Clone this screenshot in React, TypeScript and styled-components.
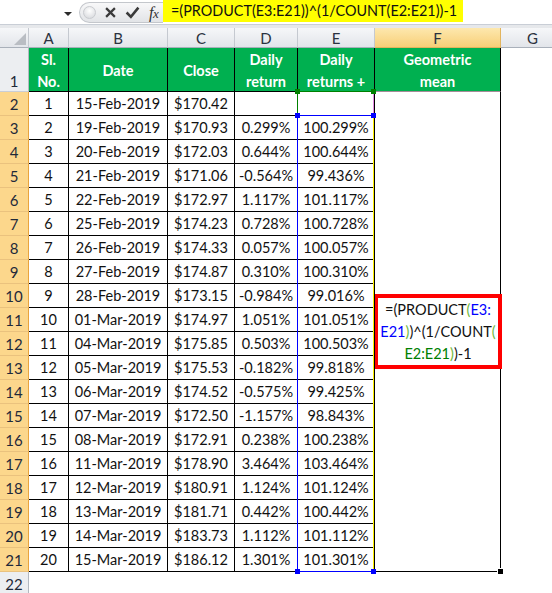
import React from "react";
import styled, { createGlobalStyle } from "styled-components";

const GlobalStyle = createGlobalStyle`
  html, body { margin: 0; padding: 0; background: #ffffff; }
  body { font-family: Lato, "Liberation Sans", Arial, sans-serif; color: #000; }
`;

const rows: string[][] = [
  ["15-Feb-2019", "$170.42", "", ""],
  ["19-Feb-2019", "$170.93", "0.299%", "100.299%"],
  ["20-Feb-2019", "$172.03", "0.644%", "100.644%"],
  ["21-Feb-2019", "$171.06", "-0.564%", "99.436%"],
  ["22-Feb-2019", "$172.97", "1.117%", "101.117%"],
  ["25-Feb-2019", "$174.23", "0.728%", "100.728%"],
  ["26-Feb-2019", "$174.33", "0.057%", "100.057%"],
  ["27-Feb-2019", "$174.87", "0.310%", "100.310%"],
  ["28-Feb-2019", "$173.15", "-0.984%", "99.016%"],
  ["01-Mar-2019", "$174.97", "1.051%", "101.051%"],
  ["04-Mar-2019", "$175.85", "0.503%", "100.503%"],
  ["05-Mar-2019", "$175.53", "-0.182%", "99.818%"],
  ["06-Mar-2019", "$174.52", "-0.575%", "99.425%"],
  ["07-Mar-2019", "$172.50", "-1.157%", "98.843%"],
  ["08-Mar-2019", "$172.91", "0.238%", "100.238%"],
  ["11-Mar-2019", "$178.90", "3.464%", "103.464%"],
  ["12-Mar-2019", "$180.91", "1.124%", "101.124%"],
  ["13-Mar-2019", "$181.71", "0.442%", "100.442%"],
  ["14-Mar-2019", "$183.73", "1.112%", "101.112%"],
  ["15-Mar-2019", "$186.12", "1.301%", "101.301%"],
];

const Window = styled.div`
  width: 552px;
  height: 593px;
  overflow: hidden;
  display: flex;
  flex-direction: column;
  background: #fff;
`;

/* formula bar */
const Bar = styled.div`
  display: flex;
  flex: none;
  height: 24px;
  border-bottom: 1px solid #c9ced6;
`;

const NameBox = styled.div`
  width: 75px;
  display: flex;
  align-items: center;
  justify-content: flex-end;
  padding-right: 3px;
  box-sizing: border-box;
`;

const DropArrow = styled.span`
  width: 0;
  height: 0;
  border-left: 4px solid transparent;
  border-right: 4px solid transparent;
  border-top: 4px solid #2b2b2b;
  margin-top: 3px;
`;

const Tools = styled.div`
  width: 84px;
  height: 21px;
  margin: 2px 0 0 4px;
  padding-left: 3px;
  box-sizing: border-box;
  border: 1px solid #c4c7cc;
  border-right: none;
  border-radius: 11px 0 0 11px;
  background: linear-gradient(#f8f8f9, #e2e4e7);
  display: flex;
  align-items: center;
  gap: 9px;
`;

const Knob = styled.span`
  width: 13px;
  height: 13px;
  border-radius: 50%;
  box-sizing: border-box;
  border: 1px solid #c9cbcf;
  background: radial-gradient(circle at 50% 35%, #ffffff, #d3d5d9);
`;

const Fx = styled.span`
  font-family: "Liberation Serif", "DejaVu Serif", serif;
  font-style: italic;
  font-size: 16px;
  color: #333;
  letter-spacing: -0.5px;
  span {
    font-size: 13px;
  }
`;

const FormulaField = styled.div`
  flex: 1;
  display: flex;
  align-items: flex-start;
`;

const FormulaText = styled.span`
  height: 22px;
  line-height: 22px;
  padding: 0 6px 0 8px;
  background: #ffff00;
  font-size: 14.4px;
  color: #111;
  white-space: nowrap;
`;

const Band = styled.div`
  flex: none;
  height: 3px;
  background: #e6e8eb;
`;

/* sheet */
const Sheet = styled.div`
  display: grid;
  grid-template-columns: 29px 40px 99px 67px 63px 77px 126px 64px;
  grid-template-rows: 20px 44px repeat(20, 24px) 24px;
`;

const Corner = styled.div`
  box-sizing: border-box;
  border-right: 1px solid #c5c9d0;
  border-bottom: 1px solid #a9b0ba;
  background: linear-gradient(#f6f7f9, #e2e5ea);
  display: flex;
  align-items: flex-end;
  justify-content: flex-end;
  padding: 0 2px 2px 0;
  &::after {
    content: "";
    border-left: 12px solid transparent;
    border-bottom: 12px solid #b9bdc3;
  }
`;

const ColHead = styled.div<{ $active?: boolean }>`
  box-sizing: border-box;
  border-right: 1px solid ${(p) => (p.$active ? "#e2b45e" : "#c5c9d0")};
  border-bottom: 1px solid ${(p) => (p.$active ? "#e2b45e" : "#a9b0ba")};
  background: ${(p) =>
    p.$active ? "linear-gradient(#fde8ae, #f8cf78)" : "linear-gradient(#f6f7f9, #e2e5ea)"};
  display: flex;
  align-items: center;
  justify-content: center;
  font-size: 15px;
  color: #2b3240;
`;

const RowHead = styled.div<{ $active?: boolean; $bottom?: boolean }>`
  box-sizing: border-box;
  border-right: 1px solid ${(p) => (p.$active ? "#e9a43d" : "#b2b8c0")};
  border-bottom: 1px solid ${(p) => (p.$active ? "#eac27e" : "#c9ced6")};
  background: ${(p) => (p.$active ? "#fcd78c" : "#eceef1")};
  display: flex;
  align-items: ${(p) => (p.$bottom ? "flex-end" : "center")};
  justify-content: center;
  padding-bottom: ${(p) => (p.$bottom ? "1px" : "0")};
  font-size: 15px;
  color: #1f2a3a;
`;

const HeadCell = styled.div<{ $under?: string }>`
  box-sizing: border-box;
  background: #00b050;
  border-right: 1px solid #000;
  border-bottom: 1px solid ${(p) => p.$under ?? "#000"};
  display: flex;
  align-items: center;
  justify-content: center;
  text-align: center;
  color: #fff;
  font-weight: 700;
  font-size: 14.5px;
  line-height: 22px;
  padding-top: 2px;
`;

const Cell = styled.div<{ $right?: string }>`
  position: relative;
  box-sizing: border-box;
  border-right: 1px solid ${(p) => p.$right ?? "#000"};
  border-bottom: 1px solid #000;
  display: flex;
  align-items: center;
  justify-content: center;
  font-size: 14.5px;
  white-space: nowrap;
  color: #111;
`;

const Blank = styled.div``;

const Merged = styled.div`
  grid-column: 7;
  grid-row: 3 / 23;
  position: relative;
  box-sizing: border-box;
  border-right: 1px solid #000;
  border-bottom: 1px solid #000;
  display: flex;
  align-items: center;
`;

const FormulaBox = styled.div`
  flex: 1;
  margin: 0 -2px 0 -1px;
  height: 75px;
  box-sizing: border-box;
  border: 4px solid #ff0000;
  display: flex;
  align-items: center;
  justify-content: center;
  text-align: center;
  font-size: 14.5px;
  line-height: 22px;
  color: #111;
`;

const Ref = styled.span<{ $c: string }>`
  color: ${(p) => p.$c};
`;

const RefRange = styled.div<{ $rows: number; $line: string; $side: string }>`
  position: absolute;
  left: -1px;
  top: -1px;
  width: calc(100% + 1px);
  height: ${(p) => p.$rows * 24 + 1}px;
  box-sizing: border-box;
  border: 1px solid ${(p) => p.$line};
  border-right-color: ${(p) => p.$side};
  pointer-events: none;
  z-index: 2;
`;

const Handle = styled.span<{ $c: string; $x: "l" | "r"; $y: "t" | "b" }>`
  position: absolute;
  width: 5px;
  height: 5px;
  background: ${(p) => p.$c};
  ${(p) => (p.$x === "l" ? "left: -3px;" : "right: -3px;")}
  ${(p) => (p.$y === "t" ? "top: -3px;" : "bottom: -3px;")}
`;

const FillHandle = styled.span`
  position: absolute;
  right: -4px;
  bottom: -4px;
  width: 5px;
  height: 5px;
  background: #000;
  border: 1px solid #fff;
`;

const GREEN = "#008000";
const BLUE = "#0000ff";
const PAREN = "#6fb83a";

export default function App() {
  return (
    <Window>
      <GlobalStyle />
      <Bar>
        <NameBox>
          <DropArrow />
        </NameBox>
        <Tools>
          <Knob />
          <svg width="11" height="11" viewBox="0 0 10 10">
            <path d="M1 1 L9 9 M9 1 L1 9" stroke="#3a3a3a" strokeWidth="2" fill="none" />
          </svg>
          <svg width="15" height="13" viewBox="0 0 14 12">
            <path d="M1.5 6 L5.5 10 L12.5 1.5" stroke="#3a3a3a" strokeWidth="2.4" fill="none" />
          </svg>
          <Fx>
            f<span>x</span>
          </Fx>
        </Tools>
        <FormulaField>
          <FormulaText>=(PRODUCT(E3:E21))^(1/COUNT(E2:E21))-1</FormulaText>
        </FormulaField>
      </Bar>
      <Band />
      <Sheet>
        <Corner />
        {["A", "B", "C", "D", "E", "F", "G"].map((c) => (
          <ColHead key={c} $active={c === "F"}>
            {c}
          </ColHead>
        ))}

        <RowHead $bottom>1</RowHead>
        <HeadCell>
          Sl.
          <br />
          No.
        </HeadCell>
        <HeadCell>Date</HeadCell>
        <HeadCell>Close</HeadCell>
        <HeadCell>
          Daily
          <br />
          return
        </HeadCell>
        <HeadCell>
          Daily
          <br />
          returns +
        </HeadCell>
        <HeadCell $under="#a58c98">
          Geometric
          <br />
          mean
        </HeadCell>
        <Blank />

        <Merged>
          <FormulaBox>
            <div>
              =(PRODUCT<Ref $c={PAREN}>(</Ref>
              <Ref $c={BLUE}>E3:</Ref>
              <br />
              <Ref $c={BLUE}>E21</Ref>
              <Ref $c={PAREN}>)</Ref>)^(1/COUNT<Ref $c={PAREN}>(</Ref>
              <br />
              <Ref $c={GREEN}>E2:E21</Ref>
              <Ref $c={PAREN}>)</Ref>)-1
            </div>
          </FormulaBox>
          <FillHandle />
        </Merged>

        {rows.map((r, i) => (
          <React.Fragment key={i}>
            <RowHead $active>{i + 2}</RowHead>
            <Cell>{i + 1}</Cell>
            <Cell>{r[0]}</Cell>
            <Cell>{r[1]}</Cell>
            <Cell>{r[2]}</Cell>
            <Cell>
              {r[3]}
              {i === 0 && (
                <RefRange $rows={20} $line={GREEN} $side="#e58be5">
                  <Handle $c={GREEN} $x="l" $y="t" />
                  <Handle $c={GREEN} $x="r" $y="t" />
                </RefRange>
              )}
              {i === 1 && (
                <RefRange $rows={19} $line={BLUE} $side="#ffee00">
                  <Handle $c={BLUE} $x="l" $y="t" />
                  <Handle $c={BLUE} $x="r" $y="t" />
                  <Handle $c={BLUE} $x="l" $y="b" />
                  <Handle $c={BLUE} $x="r" $y="b" />
                </RefRange>
              )}
            </Cell>
            <Blank />
          </React.Fragment>
        ))}

        <RowHead>22</RowHead>
        {Array.from({ length: 7 }).map((_, k) => (
          <Blank key={k} />
        ))}
      </Sheet>
    </Window>
  );
}
